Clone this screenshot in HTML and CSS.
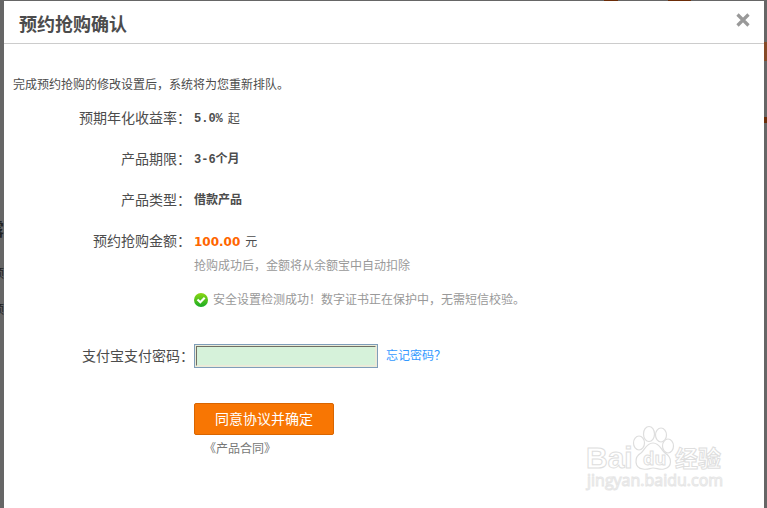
FILE: index.html
```html
<!DOCTYPE html>
<html lang="zh-CN">
<head>
<meta charset="utf-8">
<title>预约抢购确认</title>
<link rel="stylesheet" href="styles.css">
</head>
<body>
<div class="underlay" aria-hidden="true">
  <span class="peek peek-title">露</span>
  <span class="peek peek-one">预</span>
  <span class="peek peek-two">预</span>
  <span class="chip chip-a"></span>
  <span class="chip chip-b"></span>
  <span class="chip chip-c"></span>
  <span class="chip chip-d"></span>
</div>
<main class="dialog">
  <header class="dialog-head">
    <h1>预约抢购确认</h1>
    <button class="close" type="button" aria-label="关闭">
      <svg width="14" height="14" viewBox="0 0 14 14"><path d="M1.500 1.500L12.500 12.500M12.500 1.500L1.500 12.500" stroke="#999" stroke-width="3.200" fill="none"/></svg>
    </button>
  </header>
  <form class="dialog-body">
    <p class="intro">完成预约抢购的修改设置后，系统将为您重新排队。</p>
    <dl class="facts">
      <dt>预期年化收益率：</dt><dd><b class="mono">5.0%</b><span>起</span></dd>
      <dt>产品期限：</dt><dd><b class="mono">3-6个月</b></dd>
      <dt>产品类型：</dt><dd><b class="mono">借款产品</b></dd>
      <dt>预约抢购金额：</dt><dd><b class="amount">100.00</b><span>元</span></dd>
    </dl>
    <div class="indent">
      <p class="note">抢购成功后，金额将从余额宝中自动扣除</p>
      <p class="note safe">
        <svg width="14" height="14" viewBox="0 0 14 14"><defs><linearGradient id="g" x1="0" y1="0" x2="0" y2="1"><stop offset="0" stop-color="#8cd813"/><stop offset="1" stop-color="#18ab24"/></linearGradient></defs><circle cx="7" cy="7" r="7" fill="url(#g)"/><path d="M3.500 6.500L6.300 9.200L10.700 4.800" stroke="#fff" stroke-width="2.200" fill="none"/></svg>
        <span>安全设置检测成功！数字证书正在保护中，无需短信校验。</span>
      </p>
    </div>
    <div class="password-row">
      <label for="pwd">支付宝支付密码：</label>
      <span class="field"><input id="pwd" type="password"></span>
      <a href="#">忘记密码？</a>
    </div>
    <div class="indent actions">
      <button class="submit" type="submit">同意协议并确定</button>
      <a class="contract" href="#">《产品合同》</a>
    </div>
  </form>
</main>
<svg class="watermark" width="142" height="68" viewBox="0 0 142 68" role="img" aria-label="Baidu经验">
  <g fill="#fff" stroke="#dedede" stroke-width="1.200">
    <ellipse cx="56" cy="18" rx="5.500" ry="7"/>
    <ellipse cx="66" cy="9" rx="5.500" ry="7.500"/>
    <ellipse cx="78" cy="10" rx="5.500" ry="7"/>
    <ellipse cx="85" cy="21" rx="5.500" ry="7"/>
    <path d="M70 18C63 18 62 25 58 28C51 32 51 43 60 44C65 45 67 43 70 43C74 43 76 45 81 44C90 42 89 32 82 28C78 25 77 18 70 18Z"/>
  </g>
  <g class="wm-text">
    <text x="3" y="43" class="wm-logo">Bai</text>
    <text x="60" y="40" class="wm-du">du</text>
    <text x="92" y="42" class="wm-cn">经验</text>
    <text x="4" y="61" class="wm-url">jingyan.baidu.com</text>
  </g>
</svg>
</body>
</html>
```
FILE: styles.css
```css
* { box-sizing: border-box; }
body {
  margin: 0;
  min-height: 100vh;
  padding: 1px 3px 0 4px;
  display: flex;
  background: #666;
  color: #4c4c4c;
  font: 12px/18px "Liberation Sans", "Noto Sans CJK SC", sans-serif;
  overflow: hidden;
}
h1, p, dl, dd { margin: 0; }
a { text-decoration: none; }
.underlay { position: absolute; inset: 0; overflow: hidden; }
.peek { position: absolute; left: -8px; color: #222; }
.peek-title { top: 218px; left: -14px; font-size: 18px; line-height: 24px; font-weight: bold; }
.peek-one { top: 265px; }
.peek-two { top: 301px; }
.chip { position: absolute; background: #6b2c08; }
.chip-a { left: 604px; top: 0; width: 14px; height: 1px; }
.chip-b { left: 668px; top: 0; width: 23px; height: 1px; }
.chip-c { right: 0; top: 42px; width: 3px; height: 19px; background: #854a28; }
.chip-d { right: 0; top: 117px; width: 3px; height: 6px; }
.dialog { position: relative; flex: 1; background: #fff; }
.dialog-head {
  display: flex;
  align-items: center;
  justify-content: space-between;
  height: 43px;
  padding: 6px 14px 0 15px;
  border-bottom: 1px solid #ccc;
}
h1 { font-size: 18px; line-height: 26px; }
.close { padding: 0; border: 0; background: none; display: flex; margin-bottom: 10px; }
.dialog-body { padding: 32px 9px 0; }
.facts {
  display: grid;
  grid-template-columns: 178px 1fr;
  column-gap: 3px;
  row-gap: 17px;
  margin-top: 12px;
}
dt, .password-row label { font-size: 14px; line-height: 24px; text-align: right; padding-right: 7px; font-feature-settings: "halt"; }
dd { display: flex; gap: 5px; line-height: 26px; height: 24px; }
.mono { font-family: "Liberation Mono", "Noto Sans CJK SC", monospace; }
.amount { color: #f60; font-family: "DejaVu Sans", sans-serif; }
.indent { padding-left: 181px; }
.note { color: #999; margin-top: 4px; }
.safe { display: flex; align-items: center; gap: 5px; margin-top: 16px; }
.password-row { display: flex; align-items: center; margin-top: 35px; }
.password-row label { width: 181px; }
.field { display: flex; width: 184px; height: 24px; padding: 1px; border: 1px solid #7f9db9; background: #e8ecd8; }
.field input {
  width: 100%;
  border: 1px solid #ece9d8;
  border-top-color: #716f64;
  border-left-color: #716f64;
  background: #d6f2da;
  outline: 0;
}
.password-row a { margin-left: 8px; color: #3399ff; }
.actions { display: flex; flex-direction: column; align-items: flex-start; margin-top: 35px; }
.submit {
  width: 140px;
  height: 32px;
  padding: 0;
  border: 1px solid #d96500;
  border-radius: 2px;
  background: #f87603;
  color: #fff;
  font: 14px/30px "Liberation Sans", "Noto Sans CJK SC", sans-serif;
}
.contract { margin: 5px 0 0 10px; color: #777; }
.watermark { position: absolute; right: 42px; bottom: 15px; }
.wm-text text { fill: #fff; stroke: #dedede; stroke-width: 1px; font-family: "Open Sans", "Noto Sans CJK SC", sans-serif; }
.wm-text .wm-logo { font-size: 30px; font-weight: bold; font-family: "Liberation Sans", sans-serif; }
.wm-text .wm-du { font-size: 18px; font-weight: bold; }
.wm-text .wm-cn { font-size: 23px; font-weight: bold; }
.wm-text .wm-url { font-size: 16px; stroke: #e6e6e6; }
```
